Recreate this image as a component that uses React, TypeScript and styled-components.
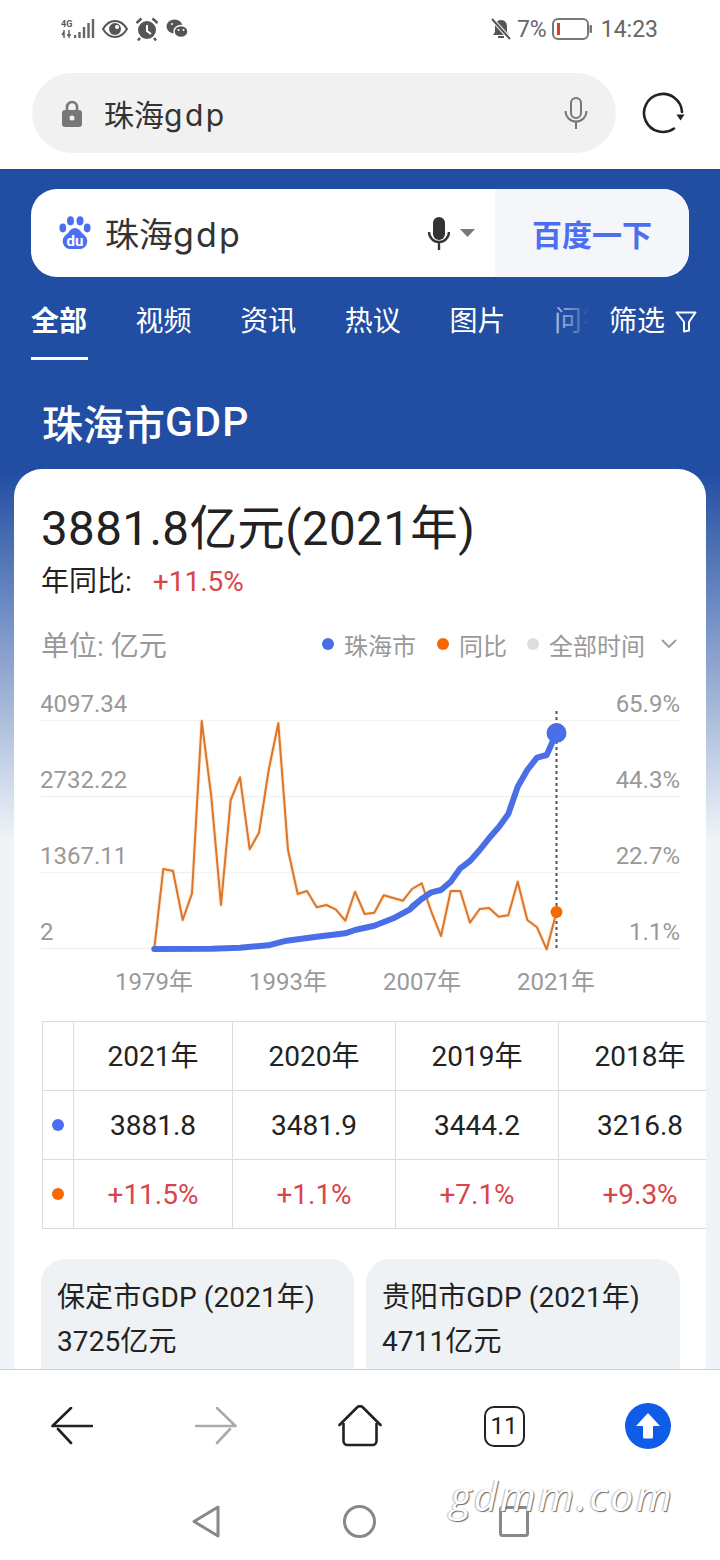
import React from 'react';
import styled, { createGlobalStyle } from 'styled-components';

const Global = createGlobalStyle`
  html, body { margin: 0; padding: 0; background: #fff; }
  body { font-family: Roboto, "Noto Sans CJK SC", sans-serif; color: #222; }
  * { box-sizing: border-box; }
`;

const Page = styled.div`
  position: relative;
  width: 720px;
  height: 1560px;
  display: flex;
  flex-direction: column;
  overflow: hidden;
  background: #fff;
`;

const StatusBar = styled.div`
  height: 60px;
  padding: 0 62px 2px 61px;
  display: flex;
  align-items: center;
  justify-content: space-between;
  color: #666;
`;
const StatusGroup = styled.div`
  display: flex;
  align-items: center;
  gap: ${(p: { $gap: number }) => p.$gap}px;
`;
const StatusText = styled.span`
  font-size: 23px;
  line-height: 30px;
  padding-top: 2px;
  color: #666;
`;
const Net = styled.div`
  display: flex;
  align-items: center;
  gap: 2px;
`;
const NetLabel = styled.span`
  font-size: 9px;
  line-height: 10px;
  font-weight: 700;
  color: #555;
  width: 11px;
  display: block;
  text-align: center;
`;

const UrlRow = styled.div`
  height: 109px;
  padding: 13px 35px 0 32px;
  display: flex;
  align-items: flex-start;
  justify-content: space-between;
`;
const UrlPill = styled.div`
  width: 584px;
  height: 80px;
  border-radius: 40px;
  background: #f1f1f1;
  display: flex;
  align-items: center;
  padding: 0 28px 0 30px;
`;
const UrlText = styled.span`
  flex: 1;
  margin-left: 22px;
  padding-top: 4px;
  font-family: Inter, "Noto Sans CJK SC", sans-serif;
  font-size: 30px;
  line-height: 40px;
  color: #333;
`;
const Latin = styled.span<{ $spacing: number }>`
  letter-spacing: ${(p) => p.$spacing}px;
`;
const Reload = styled.svg`
  margin-top: 18px;
  display: block;
`;

const Content = styled.div`
  height: 1200px;
  overflow: hidden;
  background: linear-gradient(#214da2 0, #214da2 300px, #f0f4f8 670px);
  border-top: 1px solid #1c447f;
  display: flex;
  flex-direction: column;
`;

const SearchBox = styled.div`
  margin: 19px 31px 0;
  height: 88px;
  border-radius: 26px;
  background: #fff;
  overflow: hidden;
  display: flex;
  flex: none;
`;
const SearchField = styled.div`
  width: 464px;
  display: flex;
  align-items: center;
  padding-left: 28px;
`;
const SearchText = styled.span`
  flex: 1;
  margin-left: 14px;
  padding-top: 4px;
  font-family: Inter, "Noto Sans CJK SC", sans-serif;
  font-size: 34px;
  line-height: 44px;
  color: #333;
`;
const SearchVoice = styled.div`
  display: flex;
  align-items: center;
  gap: 10px;
  margin-right: 20px;
`;
const SearchButton = styled.div`
  flex: 1;
  background: #f4f6f9;
  display: flex;
  align-items: center;
  justify-content: center;
  font-size: 30px;
  font-weight: 700;
  color: #4e6ef2;
`;

const TabsRow = styled.div`
  flex: none;
  height: 83px;
  display: flex;
  padding-left: 31px;
`;
const TabList = styled.div`
  position: relative;
  width: 558px;
  overflow: hidden;
  display: flex;
  gap: 47.6px;
  &::after {
    content: '';
    position: absolute;
    top: 0;
    bottom: 0;
    right: 0;
    width: 36px;
    background: linear-gradient(90deg, rgba(33, 77, 162, 0.35), rgba(33, 77, 162, 0.75) 70%, #214da2);
  }
`;
const Tab = styled.div<{ $active?: boolean }>`
  flex: none;
  width: 57px;
  height: 83px;
  padding-top: 25px;
  font-size: 28px;
  line-height: 40px;
  white-space: nowrap;
  font-weight: ${(p) => (p.$active ? 700 : 400)};
  color: #fff;
  border-bottom: 3px solid ${(p) => (p.$active ? '#fff' : 'transparent')};
`;
const FilterBtn = styled.div`
  margin-left: 20px;
  height: 83px;
  padding-top: 25px;
  display: flex;
  align-items: flex-start;
  gap: 10px;
  font-size: 28px;
  line-height: 40px;
  color: #fff;
  svg { margin-top: 9px; }
`;

const Heading = styled.div`
  flex: none;
  height: 109px;
  padding: 15px 0 0 42px;
  display: flex;
  align-items: center;
  font-size: 41px;
  font-weight: 500;
  color: #fff;
`;

const Card = styled.div`
  flex: 1;
  margin: 0 14px;
  padding: 30px 26px 0 27px;
  background: #fff;
  border-radius: 28px 28px 0 0;
  overflow: hidden;
`;
const BigValue = styled.div`
  font-size: 47.5px;
  line-height: 60px;
  letter-spacing: 0.4px;
  color: #222;
  white-space: nowrap;
`;
const YearRow = styled.div`
  margin-top: 3px;
  font-size: 28px;
  line-height: 40px;
  color: #222;
  display: flex;
`;
const Rise = styled.span`
  margin-left: 21px;
  color: #d8454a;
`;
const UnitRow = styled.div`
  margin-top: 22px;
  height: 40px;
  display: flex;
  align-items: center;
  justify-content: space-between;
  font-size: 28px;
  color: #999;
`;
const Legend = styled.div`
  display: flex;
  align-items: center;
  font-size: 24px;
  color: #999;
`;
const LegendItem = styled.span`
  display: flex;
  align-items: center;
  gap: 10px;
  margin-right: 21px;
  &:nth-child(2) { margin-right: 20px; }
  &:nth-child(3) { margin-right: 16px; }
`;
const Dot = styled.i<{ $color: string }>`
  display: block;
  flex: none;
  width: 12px;
  height: 12px;
  border-radius: 50%;
  background: ${(p) => p.$color};
`;
const ChartSvg = styled.svg`
  display: block;
  margin-top: 26px;
`;
const AxisText = styled.text`
  font-family: Roboto, sans-serif;
  font-size: 24px;
  fill: #999;
`;
const AxisCjk = styled(AxisText)`
  font-family: Roboto, "Noto Sans CJK SC", sans-serif;
`;

const Table = styled.div`
  margin: 21px 0 0 1px;
  display: grid;
  grid-template-columns: 31px 159px repeat(3, 163px);
  grid-auto-rows: 69px;
  border-top: 1px solid #dcdcdc;
  border-left: 1px solid #dcdcdc;
  width: max-content;
  height: 208px;
`;
const Cell = styled.div<{ $red?: boolean; $head?: boolean }>`
  border-right: 1px solid #dcdcdc;
  border-bottom: 1px solid #dcdcdc;
  display: flex;
  align-items: center;
  justify-content: center;
  font-size: 28px;
  padding-bottom: ${(p) => (p.$head ? 4 : 0)}px;
  color: ${(p) => (p.$red ? '#d8454a' : '#222')};
`;

const Related = styled.div`
  margin-top: 30px;
  display: flex;
  gap: 12px;
`;
const RelatedCard = styled.div`
  flex: 1;
  height: 130px;
  border-radius: 24px;
  background: #eff2f5;
  padding: 17px 0 0 16px;
  font-size: 28px;
  line-height: 44px;
  letter-spacing: 0.1px;
  color: #222;
  white-space: nowrap;
  &:first-child { flex: 0 0 313px; }
`;

const BottomBar = styled.div`
  height: 113px;
  flex: none;
  background: #fff;
  border-top: 1px solid #cfcfcf;
  display: flex;
`;
const NavCell = styled.div`
  flex: 1;
  height: 112px;
  display: flex;
  align-items: center;
  justify-content: center;
`;
const TabCount = styled.div`
  width: 41px;
  height: 41px;
  border: 2.5px solid #222;
  border-radius: 10px;
  display: flex;
  align-items: center;
  justify-content: center;
  font-size: 24px;
  color: #222;
`;
const SysNav = styled.div`
  flex: 1;
  display: flex;
  align-items: center;
  justify-content: center;
  gap: 123px;
`;
const Watermark = styled.div`
  position: absolute;
  left: 450px;
  top: 1468px;
  font-family: "Open Sans", sans-serif;
  font-style: italic;
  font-size: 41px;
  line-height: 54px;
  letter-spacing: 2.5px;
  color: #fff;
  text-shadow: 1px 1px 1px #666, -1px 0 1px #bbb;
`;

const orangeA = [[73,775],[100,537],[129,543],[158,690],[186,610],[215,93],[244,320],[273,645],[302,330],[330,262],[359,478],[387,428],[416,240],[445,100],[474,480],[503,612],[531,603],[560,652],[589,645],[617,658],[646,692],[675,605],[704,672],[733,668],[761,616],[790,624],[819,632]];
const orangeB = [[36,597],[65,580],[94,665],[123,738],[152,603],[181,603],[210,698],[239,657],[267,654],[296,680],[325,676],[353,575],[382,690],[411,712],[440,778],[469,668]];
const blueA = [[73,777],[245,776],[330,773],[415,766],[470,752],[560,740],[646,730],[675,720],[733,707],[790,685],[840,658],[877,625]];
const blueB = [[36,650],[65,627],[94,607],[123,600],[152,575],[181,535],[210,513],[239,480],[267,445],[296,412],[325,372],[353,290],[382,240],[411,203],[440,195],[469,130]];
const toPts = (a: number[][], ox: number) => a.map(([x, y]) => `${(ox + x / 3).toFixed(1)},${(690 + y / 3).toFixed(1)}`);
const orangePts = [...toPts(orangeA, 130), ...toPts(orangeB, 400)].join(' ');
const bluePts = [...toPts(blueA, 130), ...toPts(blueB, 400)].join(' ');

const leftLabels = ['4097.34', '2732.22', '1367.11', '2'];
const rightLabels = ['65.9%', '44.3%', '22.7%', '1.1%'];
const yearLabels = [[154, '1979年'], [288, '1993年'], [422, '2007年'], [556, '2021年']] as const;
const tabs = ['视频', '资讯', '热议', '图片', '问答'];
const years = ['2021年', '2020年', '2019年', '2018年'];
const values = ['3881.8', '3481.9', '3444.2', '3216.8'];
const rates = ['+11.5%', '+1.1%', '+7.1%', '+9.3%'];

const Chart = () => (
  <ChartSvg width={640} height={310} viewBox="41 690 640 310">
    {[0, 1, 2, 3].map((i) => (
      <g key={i}>
        <line x1={41} x2={680} y1={720.5 + i * 76} y2={720.5 + i * 76} stroke="#f2f2f2" strokeWidth={1.5} />
        <AxisText x={40} y={712 + i * 76}>{leftLabels[i]}</AxisText>
        <AxisText x={680} y={712 + i * 76} textAnchor="end">{rightLabels[i]}</AxisText>
      </g>
    ))}
    {yearLabels.map(([x, t]) => (
      <AxisCjk key={t} x={x} y={990} textAnchor="middle">{t}</AxisCjk>
    ))}
    <polyline points={orangePts} fill="none" stroke="#fbe3cf" strokeWidth={4} strokeLinejoin="round" opacity={0.7} />
    <polyline points={orangePts} fill="none" stroke="#dd7526" strokeWidth={2} strokeLinejoin="round" />
    <polyline points={bluePts} fill="none" stroke="#4a6ee6" strokeWidth={6} strokeLinejoin="round" strokeLinecap="round" />
    <line x1={556.5} x2={556.5} y1={711} y2={949} stroke="#555" strokeWidth={2} strokeDasharray="3 3" />
    <circle cx={556.5} cy={733} r={10} fill="#4a6ee6" />
    <circle cx={556.5} cy={912} r={6} fill="#f56a00" />
  </ChartSvg>
);

const Paw = () => (
  <svg width={32} height={34} viewBox="0 0 32 34">
    <ellipse cx={3.8} cy={12} rx={3.4} ry={4.4} fill="#4e6ef2" />
    <ellipse cx={11.5} cy={4.8} rx={3.5} ry={4.6} fill="#4e6ef2" />
    <ellipse cx={21} cy={4.8} rx={3.5} ry={4.6} fill="#4e6ef2" />
    <ellipse cx={28.2} cy={12} rx={3.4} ry={4.4} fill="#4e6ef2" />
    <path d="M16 12c-4 0-6 4-8 6-3 2-5 5-4 9 1 4 4 6 8 6h8c4 0 7-2 8-6 1-4-1-7-4-9-2-2-4-6-8-6z" fill="#4e6ef2" />
    <text x={16} y={29.5} textAnchor="middle" fontFamily="Roboto, sans-serif" fontSize={15} fontWeight={700} fill="#fff">du</text>
  </svg>
);

export default function App() {
  return (
    <Page>
      <Global />
      <StatusBar>
        <StatusGroup $gap={7}>
          <Net>
            <div>
              <NetLabel>4G</NetLabel>
              <svg width={11} height={10} viewBox="0 0 11 10" style={{ display: 'block' }}>
                <path d="M3 1v8M1 6l2-3M8 9V1M6 6h4" stroke="#555" strokeWidth={1.4} fill="none" />
              </svg>
            </div>
            <svg width={21} height={22} viewBox="0 0 21 22">
              <path d="M1 20v-3M5.5 20v-6M10 20V9M14.5 20V5M19 20V1" stroke="#666" strokeWidth={2.4} fill="none" />
            </svg>
          </Net>
          <svg width={26} height={20} viewBox="0 0 26 20">
            <path d="M1 10c3-5 7-8 12-8s9 3 12 8c-3 5-7 8-12 8S4 15 1 10z" fill="none" stroke="#555" strokeWidth={2} />
            <circle cx={13} cy={10} r={6} fill="#555" />
            <circle cx={15} cy={8} r={2} fill="#fff" />
          </svg>
          <svg width={24} height={24} viewBox="0 0 24 24">
            <circle cx={12} cy={13} r={9} fill="#555" />
            <path d="M12 8v6l4 3" stroke="#fff" strokeWidth={2} fill="none" />
            <path d="M1.5 6l5-4.5M22.5 6l-5-4.5M5 21l-2 2.5M19 21l2 2.5" stroke="#555" strokeWidth={2.4} fill="none" />
          </svg>
          <svg width={22} height={20} viewBox="0 0 22 20">
            <ellipse cx={8.5} cy={7.5} rx={8} ry={7} fill="#555" />
            <ellipse cx={15} cy={12.5} rx={7} ry={6} fill="#555" stroke="#fff" strokeWidth={1.4} />
            <circle cx={12.5} cy={11} r={1} fill="#fff" />
            <circle cx={17.5} cy={11} r={1} fill="#fff" />
            <circle cx={6} cy={5} r={1} fill="#fff" />
          </svg>
        </StatusGroup>
        <StatusGroup $gap={4}>
          <svg width={22} height={22} viewBox="0 0 22 22" style={{ marginRight: 1 }}>
            <path d="M11 2c4 0 6 3 6 7v5l2 3H3l2-3V9c0-4 2-7 6-7z" fill="#555" />
            <path d="M8 19h6" stroke="#555" strokeWidth={2} />
            <path d="M2 1l18 20" stroke="#fff" strokeWidth={4} />
            <path d="M2 1l18 20" stroke="#555" strokeWidth={2} />
          </svg>
          <StatusText>7%</StatusText>
          <svg width={40} height={22} viewBox="0 0 40 22" style={{ marginLeft: 1, marginRight: 5 }}>
            <rect x={1} y={1} width={35} height={20} rx={5} fill="none" stroke="#777" strokeWidth={2} />
            <rect x={5} y={5} width={3} height={12} fill="#d9402c" />
            <rect x={37.5} y={7} width={2.5} height={8} rx={1} fill="#777" />
          </svg>
          <StatusText>14:23</StatusText>
        </StatusGroup>
      </StatusBar>

      <UrlRow>
        <UrlPill>
          <svg width={20} height={27} viewBox="0 0 20 27">
            <path d="M5 12V7a5 5 0 0 1 10 0v5" fill="none" stroke="#777" strokeWidth={2.6} />
            <rect x={0} y={10} width={20} height={17} rx={3} fill="#777" />
            <circle cx={10} cy={18} r={2.5} fill="#f1f1f1" />
          </svg>
          <UrlText>珠海<Latin $spacing={2.5}>gdp</Latin></UrlText>
          <svg width={24} height={32} viewBox="0 0 24 32">
            <rect x={7} y={1} width={10} height={20} rx={5} fill="none" stroke="#777" strokeWidth={2} />
            <path d="M1.5 14a10.5 10.5 0 0 0 21 0M12 25v7" fill="none" stroke="#777" strokeWidth={2} />
          </svg>
        </UrlPill>
        <Reload width={44} height={44} viewBox="0 0 44 44">
          <path d="M33 37.5A19 19 0 1 1 41 21" fill="none" stroke="#222" strokeWidth={2.6} strokeLinecap="round" />
          <path d="M36.5 24.5h8l-4 6z" fill="#222" transform="translate(-1 -1)" />
        </Reload>
      </UrlRow>

      <Content>
        <SearchBox>
          <SearchField>
            <Paw />
            <SearchText>珠海<Latin $spacing={2.2}>gdp</Latin></SearchText>
            <SearchVoice>
              <svg width={22} height={33} viewBox="0 0 22 33">
                <rect x={5} y={0} width={12} height={23} rx={6} fill="#333" />
                <path d="M1 15a10 10 0 0 0 20 0M11 25v8" fill="none" stroke="#333" strokeWidth={2.4} />
              </svg>
              <svg width={15} height={8} viewBox="0 0 15 8">
                <path d="M0 0h15L7.5 8z" fill="#777" />
              </svg>
            </SearchVoice>
          </SearchField>
          <SearchButton>百度一下</SearchButton>
        </SearchBox>

        <TabsRow>
          <TabList>
            <Tab $active>全部</Tab>
            {tabs.map((t) => (
              <Tab key={t}>{t}</Tab>
            ))}
          </TabList>
          <FilterBtn>
            筛选
            <svg width={22} height={22} viewBox="0 0 22 22">
              <path d="M1.5 1.5h19L14 11v8.5l-5 1V11z" fill="none" stroke="#fff" strokeWidth={2} strokeLinejoin="round" />
            </svg>
          </FilterBtn>
        </TabsRow>

        <Heading>珠海市<Latin $spacing={1.3}>GDP</Latin></Heading>

        <Card>
          <BigValue>3881.8亿元(2021年)</BigValue>
          <YearRow>
            年同比:<Rise>+11.5%</Rise>
          </YearRow>
          <UnitRow>
            单位: 亿元
            <Legend>
              <LegendItem><Dot $color="#4a6ee6" />珠海市</LegendItem>
              <LegendItem><Dot $color="#f56a00" />同比</LegendItem>
              <LegendItem><Dot $color="#ddd" />全部时间</LegendItem>
              <svg width={16} height={10} viewBox="0 0 16 10" style={{ marginRight: 3 }}>
                <path d="M1 1l7 7 7-7" fill="none" stroke="#999" strokeWidth={1.8} />
              </svg>
            </Legend>
          </UnitRow>

          <Chart />

          <Table>
            <Cell />
            {years.map((y) => <Cell key={y} $head>{y}</Cell>)}
            <Cell><Dot $color="#4e6ef2" /></Cell>
            {values.map((v) => <Cell key={v}>{v}</Cell>)}
            <Cell><Dot $color="#f56a00" /></Cell>
            {rates.map((r) => <Cell key={r} $red>{r}</Cell>)}
          </Table>

          <Related>
            <RelatedCard>保定市GDP (2021年)<br />3725亿元</RelatedCard>
            <RelatedCard>贵阳市GDP (2021年)<br />4711亿元</RelatedCard>
          </Related>
        </Card>
      </Content>

      <BottomBar>
        <NavCell>
          <svg width={42} height={38} viewBox="0 0 42 38">
            <path d="M20 1L1.5 19M20 36L7 22M2 19h39" fill="none" stroke="#222" strokeWidth={2.6} strokeLinecap="round" />
          </svg>
        </NavCell>
        <NavCell>
          <svg width={42} height={38} viewBox="0 0 42 38">
            <path d="M22 1l18.5 18M22 36l13-14M1 19h39" fill="none" stroke="#aaa" strokeWidth={2.6} strokeLinecap="round" />
          </svg>
        </NavCell>
        <NavCell>
          <svg width={44} height={42} viewBox="0 0 44 42">
            <path d="M1.5 20L19 2.5a4 4 0 0 1 6 0L42.5 20" fill="none" stroke="#222" strokeWidth={2.6} strokeLinecap="round" />
            <path d="M5.5 18v18a4 4 0 0 0 4 4h25a4 4 0 0 0 4-4V18" fill="none" stroke="#222" strokeWidth={2.6} />
          </svg>
        </NavCell>
        <NavCell>
          <TabCount>11</TabCount>
        </NavCell>
        <NavCell>
          <svg width={46} height={46} viewBox="0 0 46 46">
            <circle cx={23} cy={23} r={23} fill="#0f5ce8" />
            <path d="M23 10L35 23h-7v11a1.5 1.5 0 0 1-1.5 1.5h-7A1.5 1.5 0 0 1 18 34V23h-7z" fill="#fff" />
          </svg>
        </NavCell>
      </BottomBar>

      <SysNav>
        <svg width={28} height={33} viewBox="0 0 28 33">
          <path d="M26 2v29L2 16.5z" fill="none" stroke="#888" strokeWidth={3} strokeLinejoin="round" />
        </svg>
        <svg width={33} height={33} viewBox="0 0 33 33">
          <circle cx={16.5} cy={16.5} r={15} fill="none" stroke="#888" strokeWidth={3} />
        </svg>
        <svg width={30} height={31} viewBox="0 0 30 31">
          <rect x={1.5} y={1.5} width={27} height={28} rx={2} fill="none" stroke="#888" strokeWidth={3} />
        </svg>
      </SysNav>

      <Watermark>gdmm.com</Watermark>
    </Page>
  );
}
